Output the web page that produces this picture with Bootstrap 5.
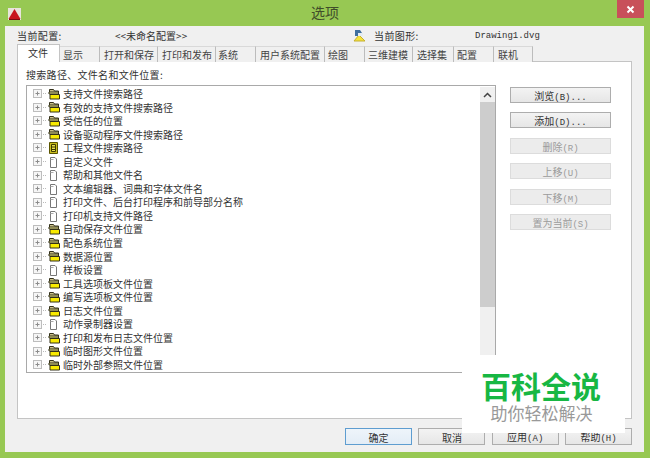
<!DOCTYPE html>
<html>

<head>
  <meta charset="utf-8">
  <meta name="viewport" content="width=device-width">
  <title>选项</title>
  <link href="https://cdn.jsdelivr.net/npm/bootstrap@5.3.3/dist/css/bootstrap.min.css" rel="stylesheet" type="text/css" />

  <style>
    html, body {
      height: 458px;
      overflow: hidden;
    }

    body {
      background: #97c853;
      color: #333;
      font-family: "Noto Sans CJK SC", "Liberation Sans", sans-serif;
      font-size: 10px;
      line-height: 13px;
      position: relative;
    }

    .mono {
      font-family: "Liberation Mono", monospace;
      font-size: 9px;
    }

    .title-bar {
      height: 26px;
      padding-left: 8px;
    }

    .title-text {
      font-size: 14px;
      line-height: 25px;
      padding-left: 12px;
      color: #3f4d2a;
    }

    .close-btn {
      width: 27px;
      height: 18px;
      margin-right: 6px;
      background: #c8505a;
      color: #fff;
    }

    .dlg-body {
      height: 426px;
      margin: 0 6px 0 5px;
      background: #f0f0f0;
      padding: 1px 12px 6px 12px;
    }

    .config-row {
      height: 16px;
      align-items: center;
      letter-spacing: .4px;
    }

    .config-label { width: 98px; }
    .config-name { width: 238px; letter-spacing: 0; }
    .drawing-icon { width: 21px; }
    .drawing-label { width: 101px; }
    .drawing-name { margin-top: 3px; letter-spacing: 0; }

    .opt-tabs {
      height: 17px;
      margin-top: 2px;
      padding-top: 1px;
      border: 0;
      flex-wrap: nowrap;
    }

    .opt-tabs .nav-link {
      height: 16px;
      padding: 0 0 0 4px;
      border: 0;
      border-radius: 0;
      border-top: 1px solid #d9d9d9;
      border-right: 1px solid #bcbcbc;
      background: #f0f0f0;
      color: #444;
      font-size: 10px;
      line-height: 15px;
      white-space: nowrap;
    }

    .opt-tabs .nav-link.active {
      position: relative;
      height: 18px;
      margin-top: -2px;
      padding-left: 10px;
      background: #fff;
      border: 1px solid #c4c4c4;
      border-bottom: 0;
      color: #333;
      z-index: 1;
    }

    .opt-tabs li:nth-child(1) .nav-link { width: 43px; }
    .opt-tabs li:nth-child(2) .nav-link { width: 40px; padding-left: 3px; }
    .opt-tabs li:nth-child(3) .nav-link { width: 58px; }
    .opt-tabs li:nth-child(4) .nav-link { width: 58px; }
    .opt-tabs li:nth-child(5) .nav-link { width: 40px; padding-left: 2px; }
    .opt-tabs li:nth-child(6) .nav-link { width: 69px; }
    .opt-tabs li:nth-child(7) .nav-link { width: 40px; padding-left: 3px; }
    .opt-tabs li:nth-child(8) .nav-link { width: 48px; padding-left: 3px; }
    .opt-tabs li:nth-child(9) .nav-link { width: 41px; }
    .opt-tabs li:nth-child(10) .nav-link { width: 40px; padding-left: 3px; }
    .opt-tabs li:nth-child(11) .nav-link { width: 39px; }

    .opt-panel {
      height: 358px;
      margin-top: -1px;
      background: #fff;
      border: 1px solid #c4c4c4;
      padding: 6px 8px;
    }

    .panel-label {
      height: 17px;
      letter-spacing: .3px;
    }

    .path-box {
      width: 470px;
      height: 288px;
      border: 1px solid #a9a9a9;
      padding: 1px 0 0 6px;
      overflow: hidden;
    }

    .path-row {
      height: 13.55px;
      line-height: 13.55px;
      white-space: nowrap;
    }

    .path-row svg {
      flex: none;
    }

    .path-row span {
      margin-left: 3px;
    }

    .v-scroll {
      width: 15px;
      background: #f0f0f0;
    }

    .scroll-up {
      height: 15px;
    }

    .scroll-thumb {
      height: 205px;
      background: #cdcdcd;
    }

    .side-btns {
      margin-left: 14px;
      width: 101px;
      padding-top: 2px;
      gap: 9.4px;
    }

    .win-btn {
      height: 16px;
      padding: 1px 0 0;
      border: 1px solid #adadad;
      border-radius: 0;
      background: linear-gradient(#f3f3f3, #e6e6e6);
      color: #333;
      font-size: 10px;
      line-height: 13px;
    }

    .win-btn:disabled {
      opacity: 1;
      background: #ececec;
      border-color: #dcdcdc;
      color: #9b9b9b;
    }

    .foot-btns {
      margin-top: 9px;
      gap: 6.3px;
      justify-content: flex-end;
    }

    .foot-btns .win-btn {
      width: 67px;
      height: 17px;
    }

    .foot-btns .win-btn.primary-btn {
      border-color: #5e9dd0;
      background: linear-gradient(#eef4fa, #e3edf6);
    }

    .watermark {
      position: absolute;
      left: 462px;
      top: 355px;
      width: 163px;
      height: 78px;
      background: #fff;
      text-align: center;
      z-index: 2;
    }

    .wm-title {
      margin-top: 14px;
      margin-right: 5px;
      font-size: 30px;
      line-height: 33px;
      font-weight: 700;
      color: #17b743;
    }

    .wm-sub {
      margin-right: 4px;
      font-size: 17px;
      line-height: 22px;
      color: #999;
    }
  </style>

</head>

<body>

  <svg width="0" height="0" class="position-absolute">
    <symbol id="expander" viewBox="0 0 15 9">
      <rect x=".5" y=".5" width="8" height="8" fill="#f6f6f6" stroke="#bdbdbd" />
      <path d="M2.500 4.500h4M4.500 2.500v4" stroke="#8c8c8c" />
      <path d="M10 4.500h4" stroke="#bbb" stroke-dasharray="1 1" />
    </symbol>
    <symbol id="folder" viewBox="0 0 12 12">
      <path d="M1.500 1.500h4l1 1.500h4v2h-9z" fill="#c9c08a" stroke="#33301a" />
      <path d="M1 4h9.500v2h-9.500z" fill="#efe98e" stroke="#33301a" />
      <path d="M2 6.500h9.500v4.500h-9.500z" fill="#f8ea00" stroke="#33301a" />
    </symbol>
    <symbol id="doc" viewBox="0 0 12 12">
      <path d="M2.500 1.500h4.500l1.500 1.500v8.500h-6z" fill="#fff" stroke="#777" />
      <path d="M2.500 3.500h3" stroke="#aaa" />
    </symbol>
    <symbol id="project" viewBox="0 0 12 12">
      <path d="M1.500 .5h8v11h-8z" fill="#c9bd1e" stroke="#5a5400" />
      <path d="M3.500 2.500h4v7h-4z" fill="#e9e04a" stroke="#3c3800" />
      <path d="M3.500 5h4M3.500 7.500h4" stroke="#3c3800" />
    </symbol>
  </svg>

  <header class="title-bar d-flex align-items-start">
    <svg class="mt-2" width="13" height="12" viewBox="0 0 13 12">
      <rect width="13" height="12" fill="#e8e4dc" />
      <path d="M6.500 1 12.500 11h-12z" fill="#c8161d" />
      <path d="M1 11h11v1h-11z" fill="#7a0c10" />
    </svg>
    <div class="title-text flex-grow-1 text-center">选项</div>
    <div class="close-btn d-flex align-items-center justify-content-center">
      <svg width="9" height="9" viewBox="0 0 9 9">
        <path d="M1.500 1.500l6 6M7.500 1.500l-6 6" stroke="#fff" stroke-width="2" />
      </svg>
    </div>
  </header>

  <main class="dlg-body">
    <div class="config-row d-flex">
      <div class="config-label">当前配置:</div>
      <div class="config-name">&lt;&lt;未命名配置&gt;&gt;</div>
      <div class="drawing-icon">
        <svg class="d-block" width="13" height="13" viewBox="0 0 13 13">
          <path d="M1 12 6 6l6 6z" fill="#f5e23c" stroke="#c4b030" />
          <path d="M2 1h5l2 3H5v3H2z" fill="#3f6f9e" />
          <path d="M5 4h5v3H5z" fill="#e4ecf2" />
        </svg>
      </div>
      <div class="drawing-label">当前图形:</div>
      <div class="drawing-name mono">Drawing1.dvg</div>
    </div>

    <ul class="nav nav-tabs opt-tabs">
      <li class="nav-item"><a class="nav-link active" href="#">文件</a></li>
      <li class="nav-item"><a class="nav-link" href="#">显示</a></li>
      <li class="nav-item"><a class="nav-link" href="#">打开和保存</a></li>
      <li class="nav-item"><a class="nav-link" href="#">打印和发布</a></li>
      <li class="nav-item"><a class="nav-link" href="#">系统</a></li>
      <li class="nav-item"><a class="nav-link" href="#">用户系统配置</a></li>
      <li class="nav-item"><a class="nav-link" href="#">绘图</a></li>
      <li class="nav-item"><a class="nav-link" href="#">三维建模</a></li>
      <li class="nav-item"><a class="nav-link" href="#">选择集</a></li>
      <li class="nav-item"><a class="nav-link" href="#">配置</a></li>
      <li class="nav-item"><a class="nav-link" href="#">联机</a></li>
    </ul>

    <section class="opt-panel">
      <div class="panel-label">搜索路径、文件名和文件位置:</div>
      <div class="d-flex">
        <div class="path-box d-flex">
          <div class="flex-grow-1" id="pathList"></div>
          <div class="v-scroll">
            <div class="scroll-up d-flex align-items-center justify-content-center">
              <svg width="9" height="6" viewBox="0 0 9 6">
                <path d="M1 5l3.500-3.500L8 5" fill="none" stroke="#444" stroke-width="1.500" />
              </svg>
            </div>
            <div class="scroll-thumb"></div>
          </div>
        </div>
        <div class="side-btns d-flex flex-column">
          <button class="btn win-btn" type="button">浏览<span class="mono">(B)...</span></button>
          <button class="btn win-btn" type="button">添加<span class="mono">(D)...</span></button>
          <button class="btn win-btn" type="button" disabled>删除<span class="mono">(R)</span></button>
          <button class="btn win-btn" type="button" disabled>上移<span class="mono">(U)</span></button>
          <button class="btn win-btn" type="button" disabled>下移<span class="mono">(M)</span></button>
          <button class="btn win-btn" type="button" disabled>置为当前<span class="mono">(S)</span></button>
        </div>
      </div>
    </section>

    <div class="foot-btns d-flex">
      <button class="btn win-btn primary-btn" type="button">确定</button>
      <button class="btn win-btn" type="button">取消</button>
      <button class="btn win-btn" type="button">应用<span class="mono">(A)</span></button>
      <button class="btn win-btn" type="button">帮助<span class="mono">(H)</span></button>
    </div>
  </main>

  <div class="watermark">
    <div class="wm-title">百科全说</div>
    <div class="wm-sub">助你轻松解决</div>
  </div>

  <script>
    const pathRows = [
      ["folder", "支持文件搜索路径"],
      ["folder", "有效的支持文件搜索路径"],
      ["folder", "受信任的位置"],
      ["folder", "设备驱动程序文件搜索路径"],
      ["project", "工程文件搜索路径"],
      ["doc", "自定义文件"],
      ["doc", "帮助和其他文件名"],
      ["doc", "文本编辑器、词典和字体文件名"],
      ["doc", "打印文件、后台打印程序和前导部分名称"],
      ["doc", "打印机支持文件路径"],
      ["folder", "自动保存文件位置"],
      ["folder", "配色系统位置"],
      ["folder", "数据源位置"],
      ["doc", "样板设置"],
      ["folder", "工具选项板文件位置"],
      ["folder", "编写选项板文件位置"],
      ["folder", "日志文件位置"],
      ["doc", "动作录制器设置"],
      ["folder", "打印和发布日志文件位置"],
      ["folder", "临时图形文件位置"],
      ["folder", "临时外部参照文件位置"]
    ]

    const pathList = document.querySelector("#pathList")
    pathRows.forEach(function (row) {
      const item = document.createElement("div")
      item.className = "path-row d-flex align-items-center"
      item.innerHTML = '<svg width="15" height="9"><use href="#expander"></use></svg>' +
        '<svg width="12" height="12"><use href="#' + row[0] + '"></use></svg>' +
        '<span>' + row[1] + '</span>'
      pathList.appendChild(item)
    })
  </script>

  <script src="https://cdn.jsdelivr.net/npm/bootstrap@5.3.3/dist/js/bootstrap.bundle.min.js"></script>
</body>

</html>
